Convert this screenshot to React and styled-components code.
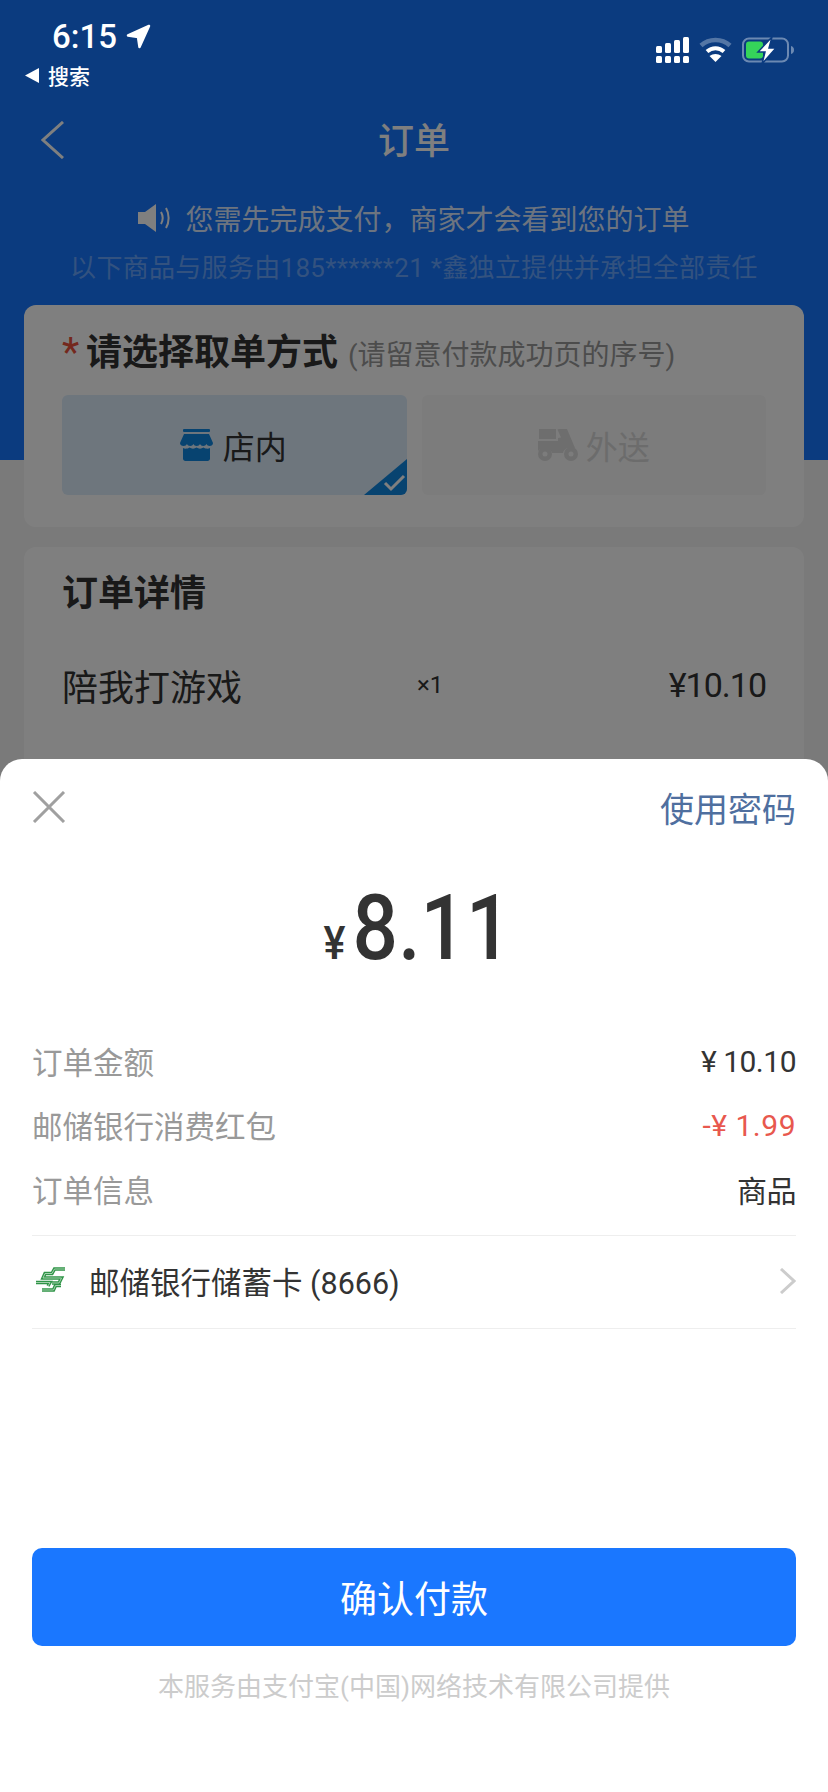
import React from 'react';
import styled, { createGlobalStyle } from 'styled-components';

const GlobalStyle = createGlobalStyle`
  html, body {
    margin: 0;
    padding: 0;
    background: #fff;
  }
  * {
    box-sizing: border-box;
  }
`;

const Page = styled.div`
  position: relative;
  width: 828px;
  height: 1792px;
  overflow: hidden;
  font-family: Roboto, "Noto Sans CJK SC", sans-serif;
  background: linear-gradient(#1677ff 460px, #f5f5f5 460px);
`;

const Overlay = styled.div`
  position: absolute;
  inset: 0;
  z-index: 2;
  background: rgba(0, 0, 0, 0.5);
`;

const StatusBar = styled.div`
  position: relative;
  z-index: 3;
  height: 100px;
  display: flex;
  justify-content: space-between;
  color: #fff;
`;

const StatusLeft = styled.div`
  padding: 16px 0 0 25px;
`;

const TimeRow = styled.div`
  display: flex;
  align-items: center;
  gap: 9px;
  padding-left: 27px;
  height: 40px;
  font-size: 33px;
  font-weight: 500;
`;

const BackToSearch = styled.div`
  display: flex;
  align-items: center;
  gap: 8px;
  margin-top: 3px;
  height: 32px;
  font-size: 21px;
  font-weight: 500;
`;

const StatusRight = styled.div`
  display: flex;
  align-items: flex-start;
  gap: 10px;
  padding: 37px 33px 0 0;
`;

const NavBar = styled.div`
  display: flex;
  align-items: center;
  justify-content: center;
  position: relative;
  height: 78px;
  padding-bottom: 2px;
`;

const BackButton = styled.div`
  position: absolute;
  left: 41px;
  top: 21px;
  display: flex;
`;

const NavTitle = styled.div`
  font-size: 36px;
  font-weight: 500;
  color: #fff;
`;

const Notice = styled.div`
  display: flex;
  align-items: center;
  justify-content: center;
  gap: 14px;
  margin-top: 20px;
  height: 40px;
  font-size: 28px;
  color: rgba(255, 255, 255, 0.85);
`;

const SubNotice = styled.div`
  margin-top: 12px;
  height: 36px;
  line-height: 36px;
  text-align: center;
  font-size: 26px;
  letter-spacing: 0.3px;
  color: rgba(255, 255, 255, 0.35);
`;

const Card = styled.div`
  margin: ${(p) => p.$top}px 24px 0;
  padding: 24px 38px 32px;
  min-height: ${(p) => p.$minHeight || 0}px;
  background: #fff;
  border-radius: 12px;
`;

const PickupTitle = styled.div`
  display: flex;
  align-items: center;
  margin-top: 3px;
  height: 42px;
`;

const Star = styled.span`
  width: 24px;
  font-size: 40px;
  line-height: 42px;
  color: #e8503a;
`;

const CardTitle = styled.span`
  display: block;
  font-size: 36px;
  line-height: 42px;
  font-weight: 700;
  color: #333;
`;

const DetailTitle = styled(CardTitle)`
  margin-top: 2px;
`;

const Hint = styled.span`
  margin-left: 10px;
  font-size: 28px;
  color: #999;
`;

const Options = styled.div`
  display: grid;
  grid-template-columns: 1fr 1fr;
  gap: 15px;
  margin-top: 21px;
`;

const Option = styled.div`
  position: relative;
  display: flex;
  align-items: center;
  justify-content: center;
  gap: ${(p) => (p.$active ? '10px' : '8px')};
  height: 100px;
  padding-right: ${(p) => (p.$active ? '2px' : '0')};
  overflow: hidden;
  border-radius: 6px;
  font-size: 32px;
  background: ${(p) => (p.$active ? '#dcecfb' : '#f8f8f8')};
  color: ${(p) => (p.$active ? '#333' : '#d8d8d8')};
`;

const CheckCorner = styled.svg`
  position: absolute;
  right: 0;
  bottom: 0;
`;

const ItemRow = styled.div`
  display: grid;
  grid-template-columns: 355px auto 1fr;
  align-items: center;
  margin-top: 44px;
  height: 44px;
  color: #333;
`;

const ItemName = styled.span`
  font-size: 36px;
`;

const ItemCount = styled.span`
  font-size: 24px;
`;

const ItemPrice = styled.span`
  text-align: right;
  font-size: 34px;
  letter-spacing: -1px;
`;

const Sheet = styled.div`
  position: absolute;
  left: 0;
  right: 0;
  bottom: 0;
  z-index: 4;
  height: 1033px;
  padding: 26px 32px 0;
  background: #fff;
  border-radius: 22px 22px 0 0;
`;

const SheetHead = styled.div`
  display: flex;
  align-items: center;
  justify-content: space-between;
  height: 44px;
`;

const PasswordLink = styled.span`
  font-size: 34px;
  color: #4f6f9f;
`;

const Amount = styled.div`
  display: flex;
  align-items: baseline;
  justify-content: center;
  height: 201px;
  padding: 54px 0 0 8px;
  color: #333;
  font-weight: 500;
  transform: scaleX(0.88);
`;

const AmountUnit = styled.span`
  margin-right: 8px;
  font-size: 47px;
`;

const AmountValue = styled.span`
  font-size: 91px;
  line-height: 91px;
`;

const InfoRow = styled.div`
  display: flex;
  align-items: center;
  justify-content: space-between;
  height: 64px;
  padding-bottom: 2px;
  font-size: 30.5px;
`;

const InfoLabel = styled.span`
  color: #999;
`;

const InfoValue = styled.span`
  font-size: 30px;
  color: ${(p) => (p.$red ? '#e8584e' : '#333')};
  letter-spacing: ${(p) => (p.$red ? '0.5px' : '-0.5px')};
`;

const PayRow = styled.div`
  display: flex;
  align-items: center;
  justify-content: space-between;
  margin-top: 13px;
  height: 94px;
  padding-bottom: 2px;
  border-top: 1px solid #eee;
  border-bottom: 1px solid #eee;
`;

const PayMethod = styled.div`
  display: flex;
  align-items: center;
  gap: 24px;
  padding-left: 3px;
  font-size: 30.5px;
  color: #333;
`;

const ConfirmButton = styled.button`
  display: block;
  width: 100%;
  height: 98px;
  margin-top: 219px;
  border: 0;
  border-radius: 10px;
  background: #1a77ff;
  color: #fff;
  font-family: inherit;
  font-size: 37px;
`;

const Footer = styled.div`
  margin-top: 25px;
  line-height: 32px;
  text-align: center;
  font-size: 26px;
  color: #ccc;
`;

const ICON_BLUE = '#0f86e0';

function StoreIcon() {
  return (
    <svg width="33" height="32" viewBox="0 0 33 32">
      <rect x="3" y="0" width="27" height="3" rx="1" fill={ICON_BLUE} />
      <path d="M4 5h25l4 9c0 2-1.500 3-3.300 3-1.600 0-2.700-1-3.200-2-.6 1-1.900 2-3.300 2-1.500 0-2.600-1-3.200-2-.6 1-1.700 2-3.300 2s-2.700-1-3.300-2c-.6 1-1.700 2-3.200 2-1.500 0-2.700-1-3.300-2-.5 1-1.600 2-3.200 2C1.500 17 0 16 0 14z" fill={ICON_BLUE} />
      <path d="M3 19c1.500 1 4.500 1 6.500-.5 2 1.500 5 1.500 7 0 2 1.500 5 1.500 7 0 2 1.500 5 1.500 6.500.5v10.500c0 1.400-1 2.500-2.500 2.500h-22C4 32 3 30.900 3 29.500z" fill={ICON_BLUE} />
    </svg>
  );
}

function ScooterIcon() {
  return (
    <svg width="40" height="32" viewBox="0 0 40 32" fill="#dcdcdc">
      <rect x="1" y="0" width="17" height="10" />
      <path d="M21 0h8l8 19h-6c-3 0-5.500 2-6 5H14c-.5-3-3.500-5-7-5s-6 1.500-7 3v-10h20v-3l3-.5-3.500-8z" />
      <path fillRule="evenodd" d="M7 18a7 7 0 1 1 0 14 7 7 0 0 1 0-14zm0 4.500a2.500 2.500 0 1 0 0 5 2.500 2.500 0 0 0 0-5z" />
      <path fillRule="evenodd" d="M33 18a7 7 0 1 1 0 14 7 7 0 0 1 0-14zm0 4.500a2.500 2.500 0 1 0 0 5 2.500 2.500 0 0 0 0-5z" />
    </svg>
  );
}

function SignalIcon() {
  return (
    <svg width="33" height="26" viewBox="0 0 33 26" fill="#fff">
      <rect x="0" y="9" width="6" height="7" rx="1.500" />
      <rect x="9" y="6" width="6" height="10" rx="1.500" />
      <rect x="18" y="3" width="6" height="13" rx="1.500" />
      <rect x="27" y="0" width="6" height="16" rx="1.500" />
      <rect x="0" y="19" width="6" height="7" rx="1.500" />
      <rect x="9" y="19" width="6" height="7" rx="1.500" />
      <rect x="18" y="19" width="6" height="7" rx="1.500" />
      <rect x="27" y="19" width="6" height="7" rx="1.500" />
    </svg>
  );
}

function WifiIcon() {
  return (
    <svg width="33" height="25" viewBox="0 0 33 25" fill="none">
      <path d="M2 8.500C10 1 23 1 31 8.500" stroke="rgba(255,255,255,0.3)" strokeWidth="4.500" />
      <path d="M8 14.500c5-4.500 12-4.500 17 0" stroke="#fff" strokeWidth="4" />
      <path d="M16.500 25l-6-6c3.500-2.800 8.500-2.800 12 0z" fill="#fff" />
    </svg>
  );
}

function BatteryIcon() {
  return (
    <svg width="53" height="27" viewBox="0 0 53 27">
      <rect x="1" y="1.500" width="45" height="23" rx="6" fill="none" stroke="rgba(255,255,255,0.4)" strokeWidth="2" />
      <path d="M49 9c2 .5 3 2 3 4s-1 3.500-3 4z" fill="rgba(255,255,255,0.4)" />
      <rect x="4" y="4.500" width="17" height="17" rx="3" fill="#35d45a" />
      <path d="M30 0L16 15h7l-3 12 14-16h-7z" fill="#fff" stroke="#0b3b80" strokeWidth="1.500" />
    </svg>
  );
}

const POST_BANDS = [
  'M30 3H19.500L17 7.500H10L8 12H26.500L24 17H17',
  'M1 16.500H15L13 20',
  'M7 24H18.500L20.500 19.500H26',
];

function PostLogo() {
  return (
    <svg width="30" height="30" viewBox="0 0 30 30" fill="none">
      {POST_BANDS.map((d) => (
        <path key={d} d={d} stroke="#2f9447" strokeWidth="3.400" />
      ))}
      {POST_BANDS.map((d) => (
        <path key={`${d}-inner`} d={d} stroke="#bfe0c5" strokeWidth="0.8" />
      ))}
    </svg>
  );
}

export default function App() {
  return (
    <Page>
      <GlobalStyle />
      <StatusBar>
        <StatusLeft>
          <TimeRow>
            6:15
            <svg width="25" height="25" viewBox="0 0 25 25" fill="#fff" stroke="#fff" strokeWidth="2.500" strokeLinejoin="round">
              <path d="M23 2L2 11.500l10 1.500 1.500 10z" />
            </svg>
          </TimeRow>
          <BackToSearch>
            <svg width="15" height="15" viewBox="0 0 15 15" fill="#fff">
              <path d="M14 0v15L0 7.500z" />
            </svg>
            搜索
          </BackToSearch>
        </StatusLeft>
        <StatusRight>
          <SignalIcon />
          <WifiIcon />
          <BatteryIcon />
        </StatusRight>
      </StatusBar>

      <NavBar>
        <BackButton>
          <svg width="23" height="38" viewBox="0 0 23 38" fill="none" stroke="#fff" strokeWidth="3">
            <path d="M22 1L2 19l20 18" />
          </svg>
        </BackButton>
        <NavTitle>订单</NavTitle>
      </NavBar>

      <Notice>
        <svg width="33" height="28" viewBox="0 0 33 28" fill="none">
          <path d="M0 8h7l11-8v28L7 20H0z" fill="#fff" />
          <path d="M23 8c2 3.500 2 8.500 0 12" stroke="#fff" strokeWidth="2" />
          <path d="M28 4c3.500 6 3.500 14 0 20" stroke="#fff" strokeWidth="2" />
        </svg>
        您需先完成支付，商家才会看到您的订单
      </Notice>
      <SubNotice>以下商品与服务由185******21 *鑫独立提供并承担全部责任</SubNotice>

      <Card $top={19}>
        <PickupTitle>
          <Star>*</Star>
          <CardTitle>请选择取单方式</CardTitle>
          <Hint>(请留意付款成功页的序号)</Hint>
        </PickupTitle>
        <Options>
          <Option $active>
            <StoreIcon />
            店内
            <CheckCorner width="43" height="36" viewBox="0 0 43 36">
              <path d="M43 0v36H0z" fill={ICON_BLUE} />
              <path d="M21 24l6 6 13-13" fill="none" stroke="#fff" strokeWidth="3" />
            </CheckCorner>
          </Option>
          <Option>
            <ScooterIcon />
            外送
          </Option>
        </Options>
      </Card>

      <Card $top={20} $minHeight={400}>
        <DetailTitle>订单详情</DetailTitle>
        <ItemRow>
          <ItemName>陪我打游戏</ItemName>
          <ItemCount>×1</ItemCount>
          <ItemPrice>¥10.10</ItemPrice>
        </ItemRow>
      </Card>

      <Overlay />

      <Sheet>
        <SheetHead>
          <svg width="34" height="32" viewBox="0 0 34 32" fill="none" stroke="#a0a0a0" strokeWidth="3">
            <path d="M2 1l30 30M32 1L2 31" />
          </svg>
          <PasswordLink>使用密码</PasswordLink>
        </SheetHead>
        <Amount>
          <AmountUnit>¥</AmountUnit>
          <AmountValue>8.11</AmountValue>
        </Amount>
        <InfoRow>
          <InfoLabel>订单金额</InfoLabel>
          <InfoValue>¥ 10.10</InfoValue>
        </InfoRow>
        <InfoRow>
          <InfoLabel>邮储银行消费红包</InfoLabel>
          <InfoValue $red>-¥ 1.99</InfoValue>
        </InfoRow>
        <InfoRow>
          <InfoLabel>订单信息</InfoLabel>
          <InfoValue>商品</InfoValue>
        </InfoRow>
        <PayRow>
          <PayMethod>
            <PostLogo />
            邮储银行储蓄卡 (8666)
          </PayMethod>
          <svg width="17" height="26" viewBox="0 0 17 26" fill="none" stroke="#ccc" strokeWidth="3">
            <path d="M2 1l13 12L2 25" />
          </svg>
        </PayRow>
        <ConfirmButton>确认付款</ConfirmButton>
        <Footer>本服务由支付宝(中国)网络技术有限公司提供</Footer>
      </Sheet>
    </Page>
  );
}
